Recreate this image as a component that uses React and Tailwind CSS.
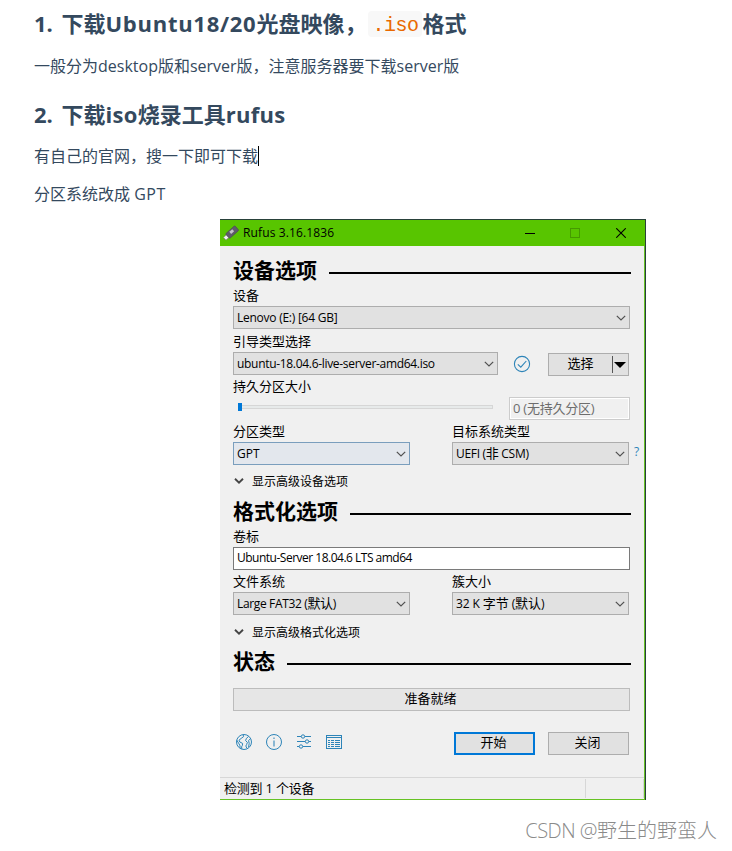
import React from "react";
import clsx from "clsx";

const Chevron = ({ className }) => (
  <svg viewBox="0 0 10 6" className={clsx("h-1.5 w-2.5 shrink-0", className)} fill="none" stroke="#505050" strokeWidth="1.2">
    <path d="M0.8 0.8 L5 5 L9.2 0.8" />
  </svg>
);

const Label = ({ children, className }) => (
  <div className={clsx("mb-px h-[18px] whitespace-nowrap text-[13px] leading-[16px]", className)}>{children}</div>
);

const Select = ({ children, className, active }) => (
  <div
    className={clsx(
      "flex h-[23px] items-center justify-between whitespace-nowrap border pl-[3px] pr-[3px] text-[12px] leading-[21px]",
      active ? "border-[#7a9ebd] bg-[#e3e7ed]" : "border-[#adadad] bg-[#e1e1e1]",
      className
    )}
  >
    <span>{children}</span>
    <Chevron />
  </div>
);

const Heading = ({ children, className }) => (
  <div className={clsx("flex h-7 w-[398px] items-center gap-3 whitespace-nowrap text-[21px] font-bold leading-7", className)}>
    <span>{children}</span>
    <div className="mt-1.5 h-0.5 flex-1 bg-black" />
  </div>
);

const Advanced = ({ children, className }) => (
  <div className={clsx("flex h-[18px] items-center whitespace-nowrap text-[12px] leading-[18px]", className)}>
    <svg viewBox="0 0 10 6" className="ml-[1px] mr-2 h-1.5 w-2.5" fill="none" stroke="#444" strokeWidth="1.9">
      <path d="M1 0.8 L5 4.6 L9 0.8" />
    </svg>
    <span className="mt-0.5">{children}</span>
  </div>
);

const UsbIcon = () => (
  <svg viewBox="0 0 16 16" className="h-4 w-4">
    <g transform="rotate(-42 8 8)">
      <rect x="-0.5" y="6.3" width="4" height="3.6" fill="#f2f2f2" stroke="#8a8a8a" strokeWidth="0.7" />
      <rect x="3.3" y="5" width="12.4" height="6.2" rx="1" fill="#5f5c6a" stroke="#4a4852" strokeWidth="0.6" />
      <rect x="7.5" y="6" width="4" height="2.8" fill="#c4c4ca" />
    </g>
  </svg>
);

const TitleBar = () => (
  <div className="flex h-[26px] items-center bg-[#58c500] pl-[3px]">
    <UsbIcon />
    <span className="ml-1 text-[12px] tracking-[0.13px]">Rufus 3.16.1836</span>
    <svg viewBox="0 0 10 10" className="ml-auto h-2.5 w-2.5" shapeRendering="crispEdges">
      <rect y="5" width="10" height="1" fill="#000" />
    </svg>
    <svg viewBox="0 0 10 10" className="ml-[35px] h-2.5 w-2.5" shapeRendering="crispEdges">
      <rect x="0.5" y="0.5" width="9" height="9" fill="none" stroke="#459a00" />
    </svg>
    <svg viewBox="0 0 10 10" className="ml-9 mr-[19px] h-2.5 w-2.5" stroke="#000" strokeWidth="1.1">
      <path d="M0.2 0.2 L9.8 9.8 M9.8 0.2 L0.2 9.8" />
    </svg>
  </div>
);

const Toolbar = () => (
  <div className="-mt-[3px] ml-[3px] flex items-center gap-3.5 text-[#2d84b8]">
    <svg viewBox="0 0 16 16" className="h-4 w-4" fill="none" stroke="currentColor" strokeWidth="1">
      <circle cx="8" cy="8" r="7.5" />
      <path d="M7.2 0.8 L7.6 2.6 L5.2 4.4 L3 6.2 L3.8 8 L6.6 9.4 L6.4 11.4 L5.6 12.8 L5.8 15" />
      <path d="M12.6 2.4 L10.4 4.4 L9.6 6.6 L11.4 8.4 L10.6 10.6 L9.8 12 L11 14.4" />
      <path d="M0.8 6.2 L2.6 9.2 L3.8 11.2 L4.2 13.8 M14.2 5 L12.6 6.6 L13.2 9.4 L12.6 13" />
    </svg>
    <svg viewBox="0 0 16 16" className="h-4 w-4" fill="none" stroke="currentColor" strokeWidth="1">
      <circle cx="8" cy="8" r="7.5" />
      <path d="M8 3.4 V5 M8 6.4 V12.4" strokeWidth="1.4" opacity="0.75" />
    </svg>
    <svg viewBox="0 0 16 16" className="h-4 w-4" fill="none" stroke="currentColor" strokeWidth="1">
      <path d="M1 2.5 H5.2 M8.8 2.5 H15 M1 7.5 H9.2 M12.8 7.5 H15 M1 12.5 H3.2 M6.8 12.5 H15" />
      <circle cx="7" cy="2.5" r="1.7" />
      <circle cx="11" cy="7.5" r="1.7" />
      <circle cx="5" cy="12.5" r="1.7" />
    </svg>
    <svg viewBox="0 0 16 16" className="h-4 w-4" fill="none" stroke="currentColor" strokeWidth="1" shapeRendering="crispEdges">
      <rect x="0.5" y="1.5" width="15" height="13" />
      <path d="M1 3.5 H15" />
      <path d="M2 6.5 H4 M5 6.5 H8 M9 6.5 H14 M2 8.5 H4 M5 8.5 H8 M9 8.5 H14 M2 10.5 H4 M5 10.5 H8 M9 10.5 H14 M2 12.5 H4 M5 12.5 H8 M9 12.5 H14" />
    </svg>
  </div>
);

const RufusWindow = () => (
  <div className="ml-[220px] flex h-[581px] w-[426px] flex-col border-r border-t border-[#29413a] text-black">
    <TitleBar />
    <div className="flex flex-1 flex-col border-b border-r border-[#66c224] bg-[#f0f0f0]">
      <div className="flex-1 pl-[13px] pt-2.5">
        <Heading>设备选项</Heading>
        <Label className="mt-[3px]">设备</Label>
        <Select className="w-[397px]">
          <span className="tracking-[-0.25px]">Lenovo (E:) [64 GB]</span>
        </Select>

        <Label className="mt-1">引导类型选择</Label>
        <div className="flex h-[23px]">
          <Select className="w-[265px]">
            <span className="tracking-[-0.31px]">ubuntu-18.04.6-live-server-amd64.iso</span>
          </Select>
          <svg viewBox="0 0 18 18" className="ml-[15px] mt-[3px] h-[18px] w-[18px]" fill="none" stroke="#2d84b8" strokeWidth="1.1">
            <circle cx="9" cy="9" r="7.6" />
            <path d="M4.8 9.3 L7.8 12.2 L13.3 6" />
          </svg>
          <div className="ml-[17px] mt-px flex h-[23px] w-[81px] items-center border border-[#adadad] bg-[#e1e1e1] text-[13px]">
            <span className="-mt-0.5 w-[63px] text-center">选择</span>
            <div className="h-[17px] w-px bg-[#555]" />
            <div className="ml-px h-0 w-0 border-x-[6px] border-t-[6px] border-x-transparent border-t-black" />
          </div>
        </div>

        <Label className="mt-[3px]">持久分区大小</Label>
        <div className="flex h-[23px]">
          <div className="ml-[5px] mt-1.5 flex h-2 w-[255px] items-center">
            <div className="h-2 w-1 bg-[#0078d7]" />
            <div className="h-1 flex-1 border border-l-0 border-[#d6d6d6] bg-[#e7eaea]" />
          </div>
          <div className="ml-4 w-[121px] border border-[#cccccc] p-px">
            <div className="h-full whitespace-nowrap bg-[#f0f0f0] pl-0.5 text-[13px] leading-[18px] tracking-[-0.25px] text-[#6d6d6d] outline outline-white">
              0 (无持久分区)
            </div>
          </div>
        </div>

        <div className="mt-[3px] flex">
          <div className="w-[219px]">
            <Label>分区类型</Label>
            <Select active className="w-[177px]">GPT</Select>
          </div>
          <div className="w-[177px]">
            <Label>目标系统类型</Label>
            <Select>
              <span className="tracking-[-0.3px]">UEFI (<span className="text-[13px]">非</span> CSM)</span>
            </Select>
          </div>
          <span className="ml-[5px] mt-5 text-[12px] leading-[18px] text-[#2d84b8]">?</span>
        </div>
        <Advanced className="mt-[7px]">显示高级设备选项</Advanced>

        <Heading className="mt-[7px]">格式化选项</Heading>
        <Label className="mt-[3px]">卷标</Label>
        <div className="h-[23px] w-[397px] border border-[#7a7a7a] bg-white pl-[3px] text-[12px] leading-[20px] tracking-[-0.5px]">
          Ubuntu-Server 18.04.6 LTS amd64
        </div>
        <div className="mt-[3px] flex">
          <div className="w-[219px]">
            <Label>文件系统</Label>
            <Select className="w-[177px]">
              <span className="tracking-[-0.35px]">Large FAT32 (<span className="text-[13px]">默认</span>)</span>
            </Select>
          </div>
          <div className="w-[177px]">
            <Label>簇大小</Label>
            <Select>
              <span className="tracking-[-0.1px]">32 K <span className="text-[13px]">字节</span> (<span className="text-[13px]">默认</span>)</span>
            </Select>
          </div>
        </div>
        <Advanced className="mt-2">显示高级格式化选项</Advanced>

        <Heading className="mt-1.5">状态</Heading>
        <div className="mt-[13px] h-[23px] w-[397px] border border-[#bcbcbc] bg-[#e6e6e6] pr-0.5 text-center text-[13px] leading-[18px]">
          准备就绪
        </div>
        <div className="mt-[21px] flex h-[23px] w-[396px] text-[13px]">
          <Toolbar />
          <div className="ml-auto w-[81px] border-2 border-[#0078d7] bg-[#e1e1e1] pr-0.5 text-center leading-[17px]">开始</div>
          <div className="ml-[13px] w-[81px] border border-[#adadad] bg-[#e1e1e1] pr-0.5 text-center leading-[19px]">关闭</div>
        </div>
      </div>

      {/* Status bar */}
      <div className="flex h-[22px] border-t border-[#d7d7d7] pl-1 pt-px text-[13px] leading-[18px]">
        <span className="flex-1 tracking-[-0.2px]">检测到 1 个设备</span>
        <div className="mb-px w-[59px] border-x border-[#d7d7d7]" />
      </div>
    </div>
  </div>
);

const App = () => {
  return (
    <div className="h-[851px] w-[732px] overflow-hidden bg-white font-['Open_Sans','Noto_Sans_CJK_SC',sans-serif]">
      <div className="h-[219px] pl-[34px] text-[#34495e]">
        <h2 className="flex h-[47px] items-center whitespace-nowrap text-[22px] font-bold">
          <span className="w-[27.5px]">1.</span>
          <span>下载</span>
          <span className="tracking-[0.73px]">Ubuntu18/20</span>
          <span>光盘映像，</span>
          <code className="ml-0.5 h-[26px] w-[54px] rounded-sm bg-[#f8f8f8] text-center font-['Liberation_Mono',monospace] text-[20px] font-normal leading-[29px] tracking-[-0.5px] text-[#e96900]">
            .iso
          </code>
          <span>格式</span>
        </h2>
        <p className="mt-px h-9 whitespace-nowrap text-[16px] leading-9">一般分为desktop版和server版，注意服务器要下载server版</p>
        <h2 className="mt-1.5 flex h-12 items-center whitespace-nowrap text-[22px] font-bold">
          <span className="w-[27.5px]">2.</span>
          <span>下载<span className="tracking-[0.3px]">iso</span>烧录工具<span className="tracking-[0.3px]">rufus</span></span>
        </h2>
        <p className="flex h-9 items-center whitespace-nowrap text-[16px]">
          有自己的官网，搜一下即可下载
          <span className="h-5 w-px bg-black" />
        </p>
        <p className="h-10 whitespace-nowrap text-[16px] leading-10">分区系统改成 <span className="tracking-[0.5px]">GPT</span></p>
      </div>
      <RufusWindow />
      <div className="mr-[15px] mt-[17px] whitespace-nowrap text-right text-[20px] font-light leading-7 text-[#8a8a8a]">
        <span className="tracking-[-0.5px]">CSDN @</span>野生的野蛮人
      </div>
    </div>
  );
};

export default App;
